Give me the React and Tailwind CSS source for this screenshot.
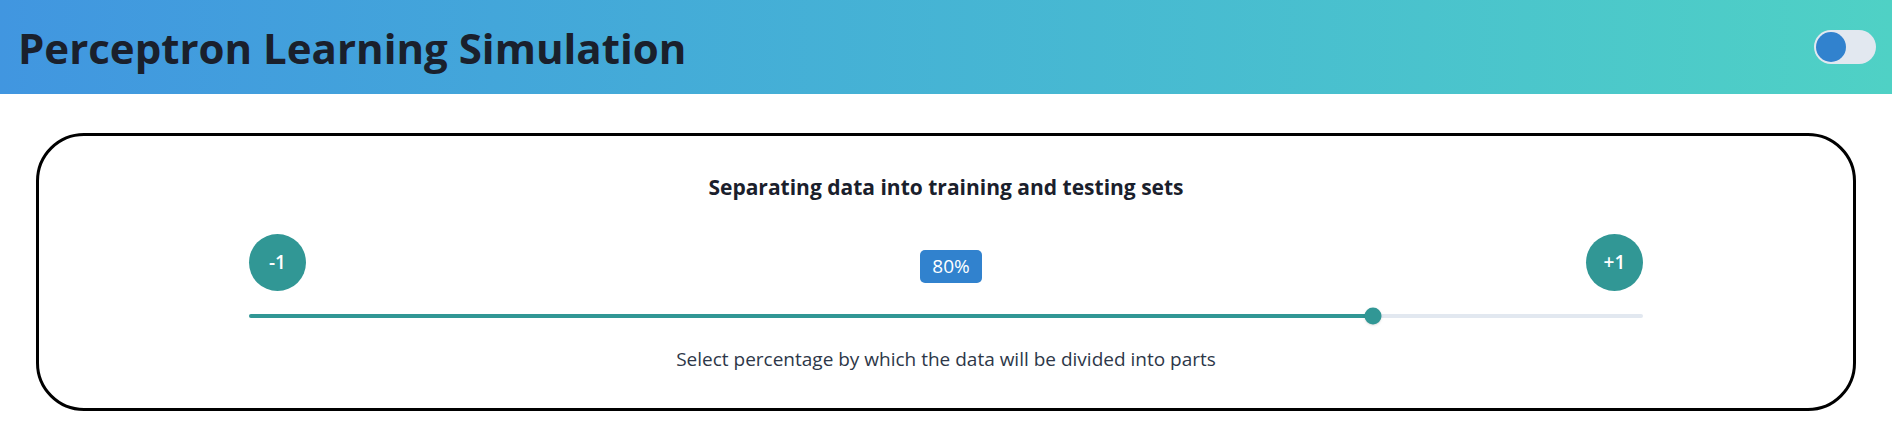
import { useState } from "react"

const font = { fontFamily: '"Open Sans", "Noto Sans", "Liberation Sans", sans-serif' }

export default function App() {
  const [on, setOn] = useState(false)
  const [split, setSplit] = useState(80)
  const pct = 0.6 + split * 1.0  // thumb sits a bit right of the raw value

  return (
    <div className="min-h-screen bg-white" style={font}>
      <header className="flex h-[94px] items-center justify-between bg-gradient-to-r from-[#4196e0] to-[#4fd1c5] pl-[18px] pr-4">
        <h1 className="text-[42px] font-bold text-[#1a202c]">Perceptron Learning Simulation</h1>
        <button
          onClick={() => setOn(!on)}
          className="flex h-[34px] w-[62px] items-center rounded-full bg-[#e2e8f0] px-[2px]"
        >
          <span className={"size-[30px] rounded-full bg-[#3182ce] " + (on ? "ml-auto" : "")} />
        </button>
      </header>

      <div className="mx-9 mt-[39px] rounded-[48px] border-[3px] border-black px-[210px] pt-[36px] pb-[35px]">
        <h2 className="text-center text-[21px] font-bold text-[#1a202c]">Separating data into training and testing sets</h2>

        <div className="mt-[30px] flex items-center justify-between">
          <button
            onClick={() => setSplit(Math.max(0, split - 1))}
            className="flex size-[57px] items-center justify-center rounded-full bg-[#319795] text-[19px] font-semibold text-white"
          >-1</button>
          <span className="ml-[10px] mt-[9px] rounded-[5px] bg-[#3182ce] px-[12px] py-[2px] text-[19px] text-white">{split}%</span>
          <button
            onClick={() => setSplit(Math.min(100, split + 1))}
            className="flex size-[57px] items-center justify-center rounded-full bg-[#319795] text-[19px] font-semibold text-white"
          >+1</button>
        </div>

        <div className="relative mt-[23px] h-[4px] rounded-full bg-[#e2e8f0]">
          <div className="h-full rounded-full bg-[#319795]" style={{ width: pct + "%" }} />
          <div
            className="absolute top-1/2 size-[17px] -translate-x-1/2 -translate-y-1/2 rounded-full bg-[#319795] shadow-sm"
            style={{ left: pct + "%" }}
          />
        </div>

        <p className="mt-[27px] text-center text-[19px] text-[#2d3748]">Select percentage by which the data will be divided into parts</p>
      </div>
    </div>
  )
}
